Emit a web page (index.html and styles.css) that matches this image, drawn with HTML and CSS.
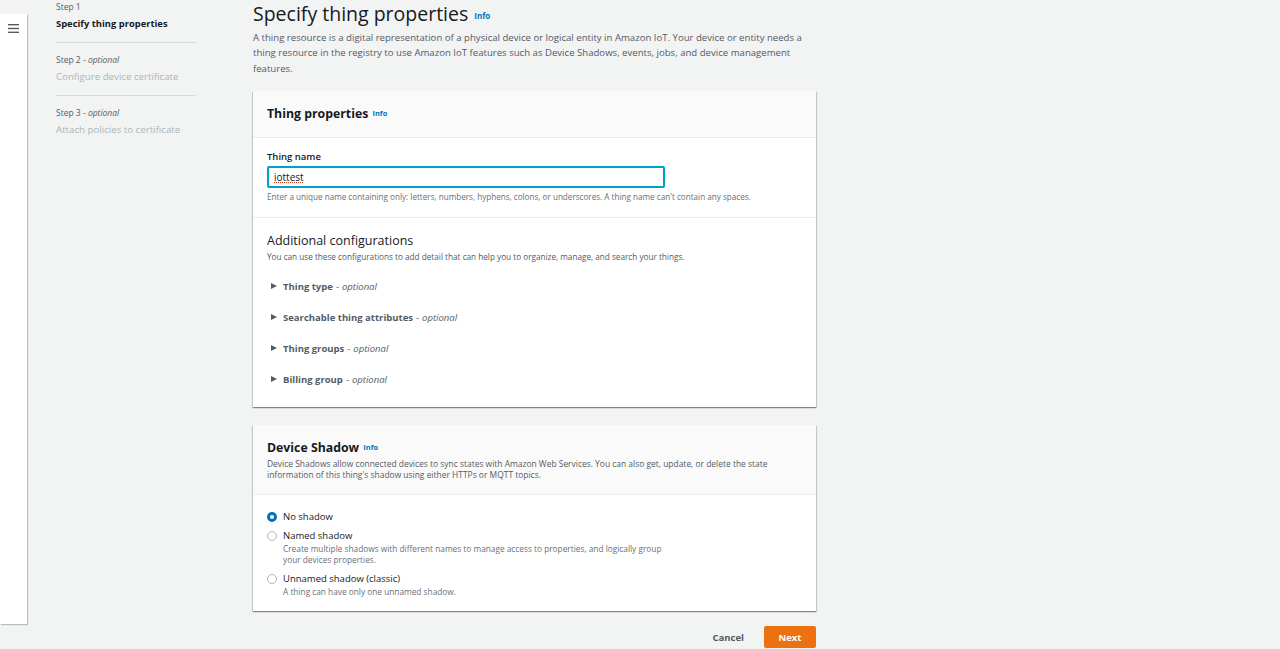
FILE: index.html
```html
<!DOCTYPE html>
<html lang="en">
<head>
<meta charset="utf-8">
<title>Specify thing properties</title>
<link rel="stylesheet" href="styles.css">
</head>
<body>
<div class="app">
  <div class="rail">
    <button class="rail-toggle" aria-label="Open navigation">
      <svg width="11" height="9" viewBox="0 0 11 9"><rect x="0" y="0" width="11" height="1.4" fill="#545b64"/><rect x="0" y="3.8" width="11" height="1.4" fill="#545b64"/><rect x="0" y="7.6" width="11" height="1.4" fill="#545b64"/></svg>
    </button>
  </div>

  <nav class="steps">
    <div class="step">
      <div class="step-label">Step 1</div>
      <div class="step-title current">Specify thing properties</div>
    </div>
    <div class="step">
      <div class="step-label">Step 2 - <i>optional</i></div>
      <div class="step-title">Configure device certificate</div>
    </div>
    <div class="step last">
      <div class="step-label">Step 3 - <i>optional</i></div>
      <div class="step-title">Attach policies to certificate</div>
    </div>
  </nav>

  <main class="main">
    <header class="page-head">
      <h1 class="page-title">Specify thing properties <a class="info">Info</a></h1>
      <p class="page-desc">A thing resource is a digital representation of a physical device or logical entity in Amazon IoT. Your device or entity needs a thing resource in the registry to use Amazon IoT features such as Device Shadows, events, jobs, and device management features.</p>
    </header>

    <section class="card">
      <div class="card-head">
        <h2 class="card-title">Thing properties <a class="info">Info</a></h2>
      </div>
      <div class="card-section">
        <label class="field-label">Thing name</label>
        <div class="input"><span class="spell">iottest</span></div>
        <div class="hint">Enter a unique name containing only: letters, numbers, hyphens, colons, or underscores. A thing name can't contain any spaces.</div>
      </div>
      <div class="card-section config">
        <h3 class="sub-title">Additional configurations</h3>
        <div class="sub-desc">You can use these configurations to add detail that can help you to organize, manage, and search your things.</div>
        <ul class="expanders">
          <li><span class="caret"></span><b>Thing type</b> - <i>optional</i></li>
          <li><span class="caret"></span><b>Searchable thing attributes</b> - <i>optional</i></li>
          <li><span class="caret"></span><b>Thing groups</b> - <i>optional</i></li>
          <li><span class="caret"></span><b>Billing group</b> - <i>optional</i></li>
        </ul>
      </div>
    </section>

    <section class="card">
      <div class="card-head">
        <h2 class="card-title">Device Shadow <a class="info">Info</a></h2>
        <div class="card-desc">Device Shadows allow connected devices to sync states with Amazon Web Services. You can also get, update, or delete the state information of this thing's shadow using either HTTPs or MQTT topics.</div>
      </div>
      <div class="radios">
        <div class="radio checked"><span class="dot"></span><div><div class="r-label">No shadow</div></div></div>
        <div class="radio"><span class="dot"></span><div><div class="r-label">Named shadow</div><div class="r-desc">Create multiple shadows with different names to manage access to properties, and logically group your devices properties.</div></div></div>
        <div class="radio"><span class="dot"></span><div><div class="r-label">Unnamed shadow (classic)</div><div class="r-desc">A thing can have only one unnamed shadow.</div></div></div>
      </div>
    </section>

    <div class="actions">
      <button class="btn-link">Cancel</button>
      <button class="btn-primary">Next</button>
    </div>
  </main>
</div>
</body>
</html>
```
FILE: styles.css
```css
* { box-sizing: border-box; }
html, body { margin: 0; padding: 0; }
body {
  background: #f2f3f3;
  font-family: "Open Sans", "Noto Sans", sans-serif;
  color: #16191f;
  height: 649px;
  overflow: hidden;
}
.app { display: flex; align-items: flex-start; }

.rail {
  width: 27px;
  height: 610px;
  margin-top: 14px;
  background: #fff;
  box-shadow: 1px 1px 1px rgba(0,28,36,0.25);
  flex-shrink: 0;
}
.rail-toggle {
  border: 0; background: none; padding: 0;
  margin: 10px 0 0 8px;
  display: block;
  line-height: 0;
}

.steps {
  width: 140px;
  margin-left: 29px;
  flex-shrink: 0;
}
.step {
  border-bottom: 1px solid #d5dbdb;
  padding-bottom: 8px;
  margin-bottom: 10px;
}
.step.last { border-bottom: 0; }
.step-label {
  font-size: 8.5px;
  line-height: 14px;
  color: #545b64;
}
.step-title {
  font-size: 9.7px;
  line-height: 20px;
  color: #aab7b8;
}
.step-title.current { color: #16191f; font-weight: 700; font-size: 9.4px; }

.main {
  margin-left: 57px;
  width: 563px;
  flex-shrink: 0;
}
.page-title {
  font-size: 19.5px;
  font-weight: 400;
  margin: 0;
  line-height: 28px;
}
.info {
  font-size: 8px;
  font-weight: 700;
  color: #0073bb;
  vertical-align: 2px;
  margin-left: 1px;
  line-height: 1;
}
.page-desc {
  margin: 2px 0 0;
  font-size: 9.6px;
  line-height: 15.4px;
  color: #545b64;
}

.card {
  background: #fff;
  margin-top: 15px;
  box-shadow: 0 1px 1px 0 rgba(0,28,36,0.3), 1px 1px 1px 0 rgba(0,28,36,0.15), -1px 1px 1px 0 rgba(0,28,36,0.15);
}
.card + .card { margin-top: 18px; }
.card-head {
  background: #fafafa;
  border-bottom: 1px solid #eaeded;
  padding: 13px 14px 14px;
}
.card-title {
  margin: 0;
  font-size: 12.3px;
  font-weight: 700;
  line-height: 19px;
}
.card-title .info { font-size: 7.5px; }
.card-section {
  padding: 12px 14px 15px;
  border-bottom: 1px solid #eaeded;
}
.card-section.config { border-bottom: 0; padding-top: 13px; padding-bottom: 5px; }
.field-label {
  display: block;
  font-size: 9.5px;
  font-weight: 600;
  line-height: 14px;
}
.input {
  margin-top: 2px;
  width: 398px;
  height: 22px;
  border: 2px solid #00a1c9;
  border-radius: 2px;
  font-size: 10px;
  line-height: 18px;
  padding-left: 5px;
}
.spell { text-decoration: underline dotted #d13212; text-decoration-thickness: 1px; text-underline-offset: 1px; }
.hint {
  margin-top: 3px;
  font-size: 8.15px;
  line-height: 11px;
  color: #687078;
}
.sub-title {
  margin: 0;
  font-size: 12.5px;
  font-weight: 400;
  line-height: 20px;
}
.sub-desc {
  font-size: 8.2px;
  line-height: 11px;
  color: #545b64;
}
.expanders {
  list-style: none;
  margin: 16px 0 0;
  padding: 0;
}
.expanders li {
  font-size: 9.5px;
  line-height: 14px;
  color: #545b64;
  height: 31px;
  padding-top: 2px;
  display: flex;
  align-items: flex-start;
}
.expanders li b { font-weight: 700; color: #545b64; margin-right: 3px; }
.expanders li i { margin-left: 3px; }
.caret {
  width: 0; height: 0;
  border-left: 6px solid #545b64;
  border-top: 3.5px solid transparent;
  border-bottom: 3.5px solid transparent;
  margin: 3px 6px 0 4px;
}

.card-desc {
  font-size: 8.45px;
  line-height: 11px;
  color: #545b64;
  margin-top: 1px;
}
.radios { padding: 15px 14px 12px; }
.radio {
  display: flex;
  align-items: flex-start;
  margin-bottom: 5px;
}
.radio:last-child { margin-bottom: 0; }
.dot {
  width: 10px; height: 10px;
  border-radius: 50%;
  border: 1px solid #aab7b8;
  margin: 2px 6px 0 0;
  flex-shrink: 0;
  background: #fff;
}
.radio.checked .dot { border: 3px solid #0073bb; }
.r-label { font-size: 9.5px; line-height: 14px; }
.r-desc {
  font-size: 8.3px;
  line-height: 11px;
  color: #687078;
  max-width: 390px;
  margin-bottom: 2px;
}

.actions {
  display: flex;
  justify-content: flex-end;
  align-items: center;
  gap: 20px;
  margin-top: 15px;
}
.btn-link {
  border: 0; background: none;
  font-family: inherit;
  font-size: 9.5px;
  font-weight: 700;
  color: #545b64;
  padding: 0;
}
.btn-primary {
  border: 0;
  background: #ec7211;
  color: #fff;
  font-family: inherit;
  font-size: 9.5px;
  font-weight: 700;
  width: 52px;
  height: 22px;
  border-radius: 2px;
}
```
